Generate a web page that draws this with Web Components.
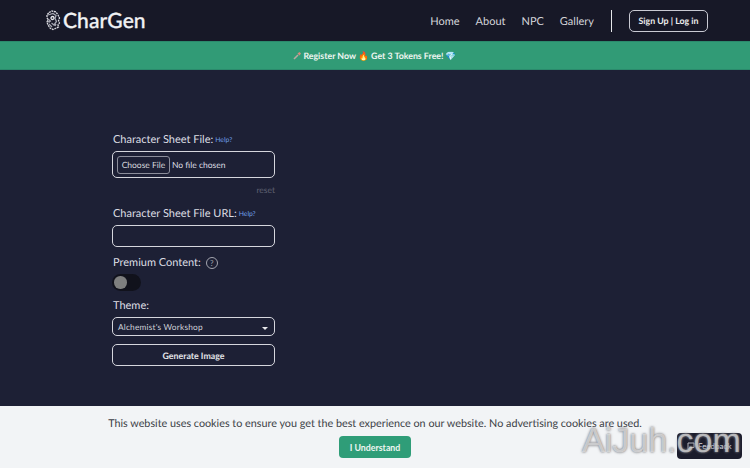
<!DOCTYPE html>
<html lang="en">
<head>
<meta charset="utf-8">
<title>CharGen</title>
<style>
  html, body { margin: 0; height: 100%; }
  body { background: #1d2035; font-family: Lato, "Noto Sans", sans-serif; overflow: hidden; text-rendering: geometricPrecision; }
  .page { height: 468px; display: flex; flex-direction: column; position: relative; }
</style>
</head>
<body>
<div class="page">
  <top-nav></top-nav>
  <promo-banner>Register Now 🔥 Get 3 Tokens Free! 💎</promo-banner>
  <sheet-form></sheet-form>
  <cookie-bar></cookie-bar>
  <feedback-tab></feedback-tab>
  <water-mark></water-mark>
</div>

<script>
class TopNav extends HTMLElement {
  constructor() {
    super();
    this.attachShadow({ mode: 'open' });
    this.shadowRoot.innerHTML = `
      <style>
        :host { display: flex; height: 41px; flex: none; align-items: center; background: #171827; padding: 0 42px 0 44px; color: #d4d5da; }
        .logo { display: flex; align-items: center; gap: 2px; }
        .name { font-size: 21px; font-weight: 500; color: #f1f2f4; letter-spacing: .1px; -webkit-text-stroke: .3px #f1f2f4; }
        nav { margin-left: auto; display: flex; gap: 16px; font-size: 11px; padding-top: 1px; }
        .sep { width: 1px; height: 22px; background: #e6e7ea; margin: 0 17px; }
        .btn { display: flex; align-items: center; justify-content: center; box-sizing: border-box; width: 79px; height: 22px; border: 1.5px solid #c9cad3; border-radius: 5px; font-size: 8.800px; font-weight: 700; color: #eceded; }
      </style>
      <div class="logo">
        <svg width="17" height="21" viewBox="0 0 17 21" fill="none" stroke="#dcdce2" stroke-width="1.300">
          <path d="M5 2.500 8 1l4 1 2 3 1.500 3-1 2.500 1 2.500-1.500 2 .5 2-3 1.500-2.500 1-3-1.500-2-3-1-3 1-2-1-2.500L3 5z" stroke-dasharray="2 .7"/>
          <path d="M4 5l5-1.500 3 2-1 3 1.500 3-2.500 3.500-2.500-2M4 9l3 2.500M5 14l3 3M11 16l1-2M4 11.500l2 .5" stroke="#a4a5b0"/>
          <circle cx="8.500" cy="8" r="1.500" fill="#171827" stroke="#e8e8ec"/>
        </svg>
        <span class="name">CharGen</span>
      </div>
      <nav><span>Home</span><span>About</span><span>NPC</span><span>Gallery</span></nav>
      <div class="sep"></div>
      <div class="btn">Sign Up | Log in</div>
    `;
  }
}

class PromoBanner extends HTMLElement {
  constructor() {
    super();
    this.attachShadow({ mode: 'open' });
    this.shadowRoot.innerHTML = `
      <style>
        :host { display: flex; flex: none; height: 29px; box-sizing: border-box; align-items: center; justify-content: center; background: #319b76; color: #eef5f1; font-size: 8.800px; font-weight: 700; border-top: 1px solid #2b8a6c; border-bottom: 1px solid #2b8a6c; }
        svg { margin-right: 1px; }
      </style>
      <svg width="9" height="9" viewBox="0 0 9 9"><path d="M1 8 5 4" stroke="#b9a9a0" stroke-width="1.600"/><path d="M4.500 2.500 6.500 1 8 2.500 6.500 4.500z" fill="#d98c80"/></svg>
      <slot></slot>
    `;
  }
}

class SheetForm extends HTMLElement {
  constructor() {
    super();
    this.attachShadow({ mode: 'open' });
    this.shadowRoot.innerHTML = `
      <style>
        :host { display: block; flex: 1; padding: 63px 0 0 112px; color: #dcdde3; }
        .col { width: 163px; display: flex; flex-direction: column; }
        label { font-size: 11px; line-height: 14px; display: flex; align-items: center; padding-left: 1px; }
        .help { font-size: 6.800px; color: #6e9fe6; margin-left: 2px; }
        .box { box-sizing: border-box; border: 1.500px solid #d5d6dd; border-radius: 5px; width: 163px; }
        .file { height: 27px; margin-top: 4px; display: flex; align-items: center; padding-left: 4px; font-size: 8.500px; }
        .choose { border: 1px solid #8b8d9a; border-radius: 3px; height: 18px; width: 53px; box-sizing: border-box; display: flex; align-items: center; justify-content: center; margin-right: 2px; color: #d6d7dc; }
        .reset { align-self: flex-end; font-size: 8.500px; color: #5f6172; margin-top: 7px; line-height: 11px; }
        .url { height: 22px; margin-top: 4px; }
        .premium { margin-top: 9px; }
        .q { width: 10px; height: 10px; border: 1px solid #a3a4ae; border-radius: 50%; font-size: 8px; display: flex; align-items: center; justify-content: center; color: #a3a4ae; margin-left: 5px; }
        .toggle { width: 29px; height: 17px; margin-top: 4px; background: #11121c; border-radius: 9px; display: flex; align-items: center; padding-left: 2px; box-sizing: border-box; }
        .toggle i { width: 12.500px; height: 12.500px; border-radius: 50%; background: #7e7f7f; display: block; }
        .theme { margin-top: 8px; }
        .select { height: 19px; margin-top: 4px; display: flex; align-items: center; justify-content: space-between; padding: 0 6px 0 5px; font-size: 8.300px; letter-spacing: .2px; color: #d0d1d8; }
        .caret { width: 0; height: 0; border: 3px solid transparent; border-top-color: #e9e9ec; border-bottom: 0; margin-top: 3px; }
        .gen { height: 22px; margin-top: 8px; display: flex; align-items: center; justify-content: center; font-size: 8.800px; font-weight: 700; color: #e3e4e8; }
      </style>
      <div class="col">
        <label>Character Sheet File:<span class="help">Help?</span></label>
        <div class="box file"><span class="choose">Choose File</span><span>No file chosen</span></div>
        <div class="reset">reset</div>
        <label style="margin-top:11px">Character Sheet File URL:<span class="help">Help?</span></label>
        <div class="box url"></div>
        <label class="premium">Premium Content:<span class="q">?</span></label>
        <div class="toggle"><i></i></div>
        <label class="theme">Theme:</label>
        <div class="box select"><span>Alchemist's Workshop</span><span class="caret"></span></div>
        <div class="box gen">Generate Image</div>
      </div>
    `;
  }
}

class CookieBar extends HTMLElement {
  constructor() {
    super();
    this.attachShadow({ mode: 'open' });
    this.shadowRoot.innerHTML = `
      <style>
        :host { display: flex; flex: none; height: 62px; box-sizing: border-box; flex-direction: column; align-items: center; background: #f2f4f6; color: #3c3f46; padding-top: 10px; }
        p { margin: 0; font-size: 10.800px; line-height: 15px; }
        button { margin-top: 5px; width: 72px; height: 22px; border: 0; border-radius: 4px; background: #2f9d78; color: #eef6f2; font: 700 8.800px Lato, sans-serif; padding: 0; }
      </style>
      <p>This website uses cookies to ensure you get the best experience on our website. No advertising cookies are used.</p>
      <button>I Understand</button>
    `;
  }
}

class FeedbackTab extends HTMLElement {
  constructor() {
    super();
    this.attachShadow({ mode: 'open' });
    this.shadowRoot.innerHTML = `
      <style>
        :host { position: absolute; left: 677px; top: 433px; width: 65px; height: 26px; box-sizing: border-box; background: #1b1c2c; border-radius: 4px; display: flex; align-items: center; padding-left: 10px; gap: 3px; color: #dcdde2; font-size: 8px; }
      </style>
      <svg width="8" height="8" viewBox="0 0 8 8" fill="none" stroke="#b9bac2"><path d="M1 1h6v4.500H3L1 7z"/></svg>
      <span>Feedback</span>
    `;
  }
}

class WaterMark extends HTMLElement {
  constructor() {
    super();
    this.attachShadow({ mode: 'open' });
    this.shadowRoot.innerHTML = `
      <style>
        :host { position: absolute; left: 582px; top: 422px; font: 400 34px/38px "Liberation Sans", sans-serif; color: rgba(255,255,255,.55); text-shadow: 0 0 2px rgba(125,125,130,.9), 0 0 3px rgba(125,125,130,.7); pointer-events: none; }
      </style>
      AiJuh.com
    `;
  }
}

customElements.define('top-nav', TopNav);
customElements.define('promo-banner', PromoBanner);
customElements.define('sheet-form', SheetForm);
customElements.define('cookie-bar', CookieBar);
customElements.define('feedback-tab', FeedbackTab);
customElements.define('water-mark', WaterMark);
</script>
</body>
</html>
